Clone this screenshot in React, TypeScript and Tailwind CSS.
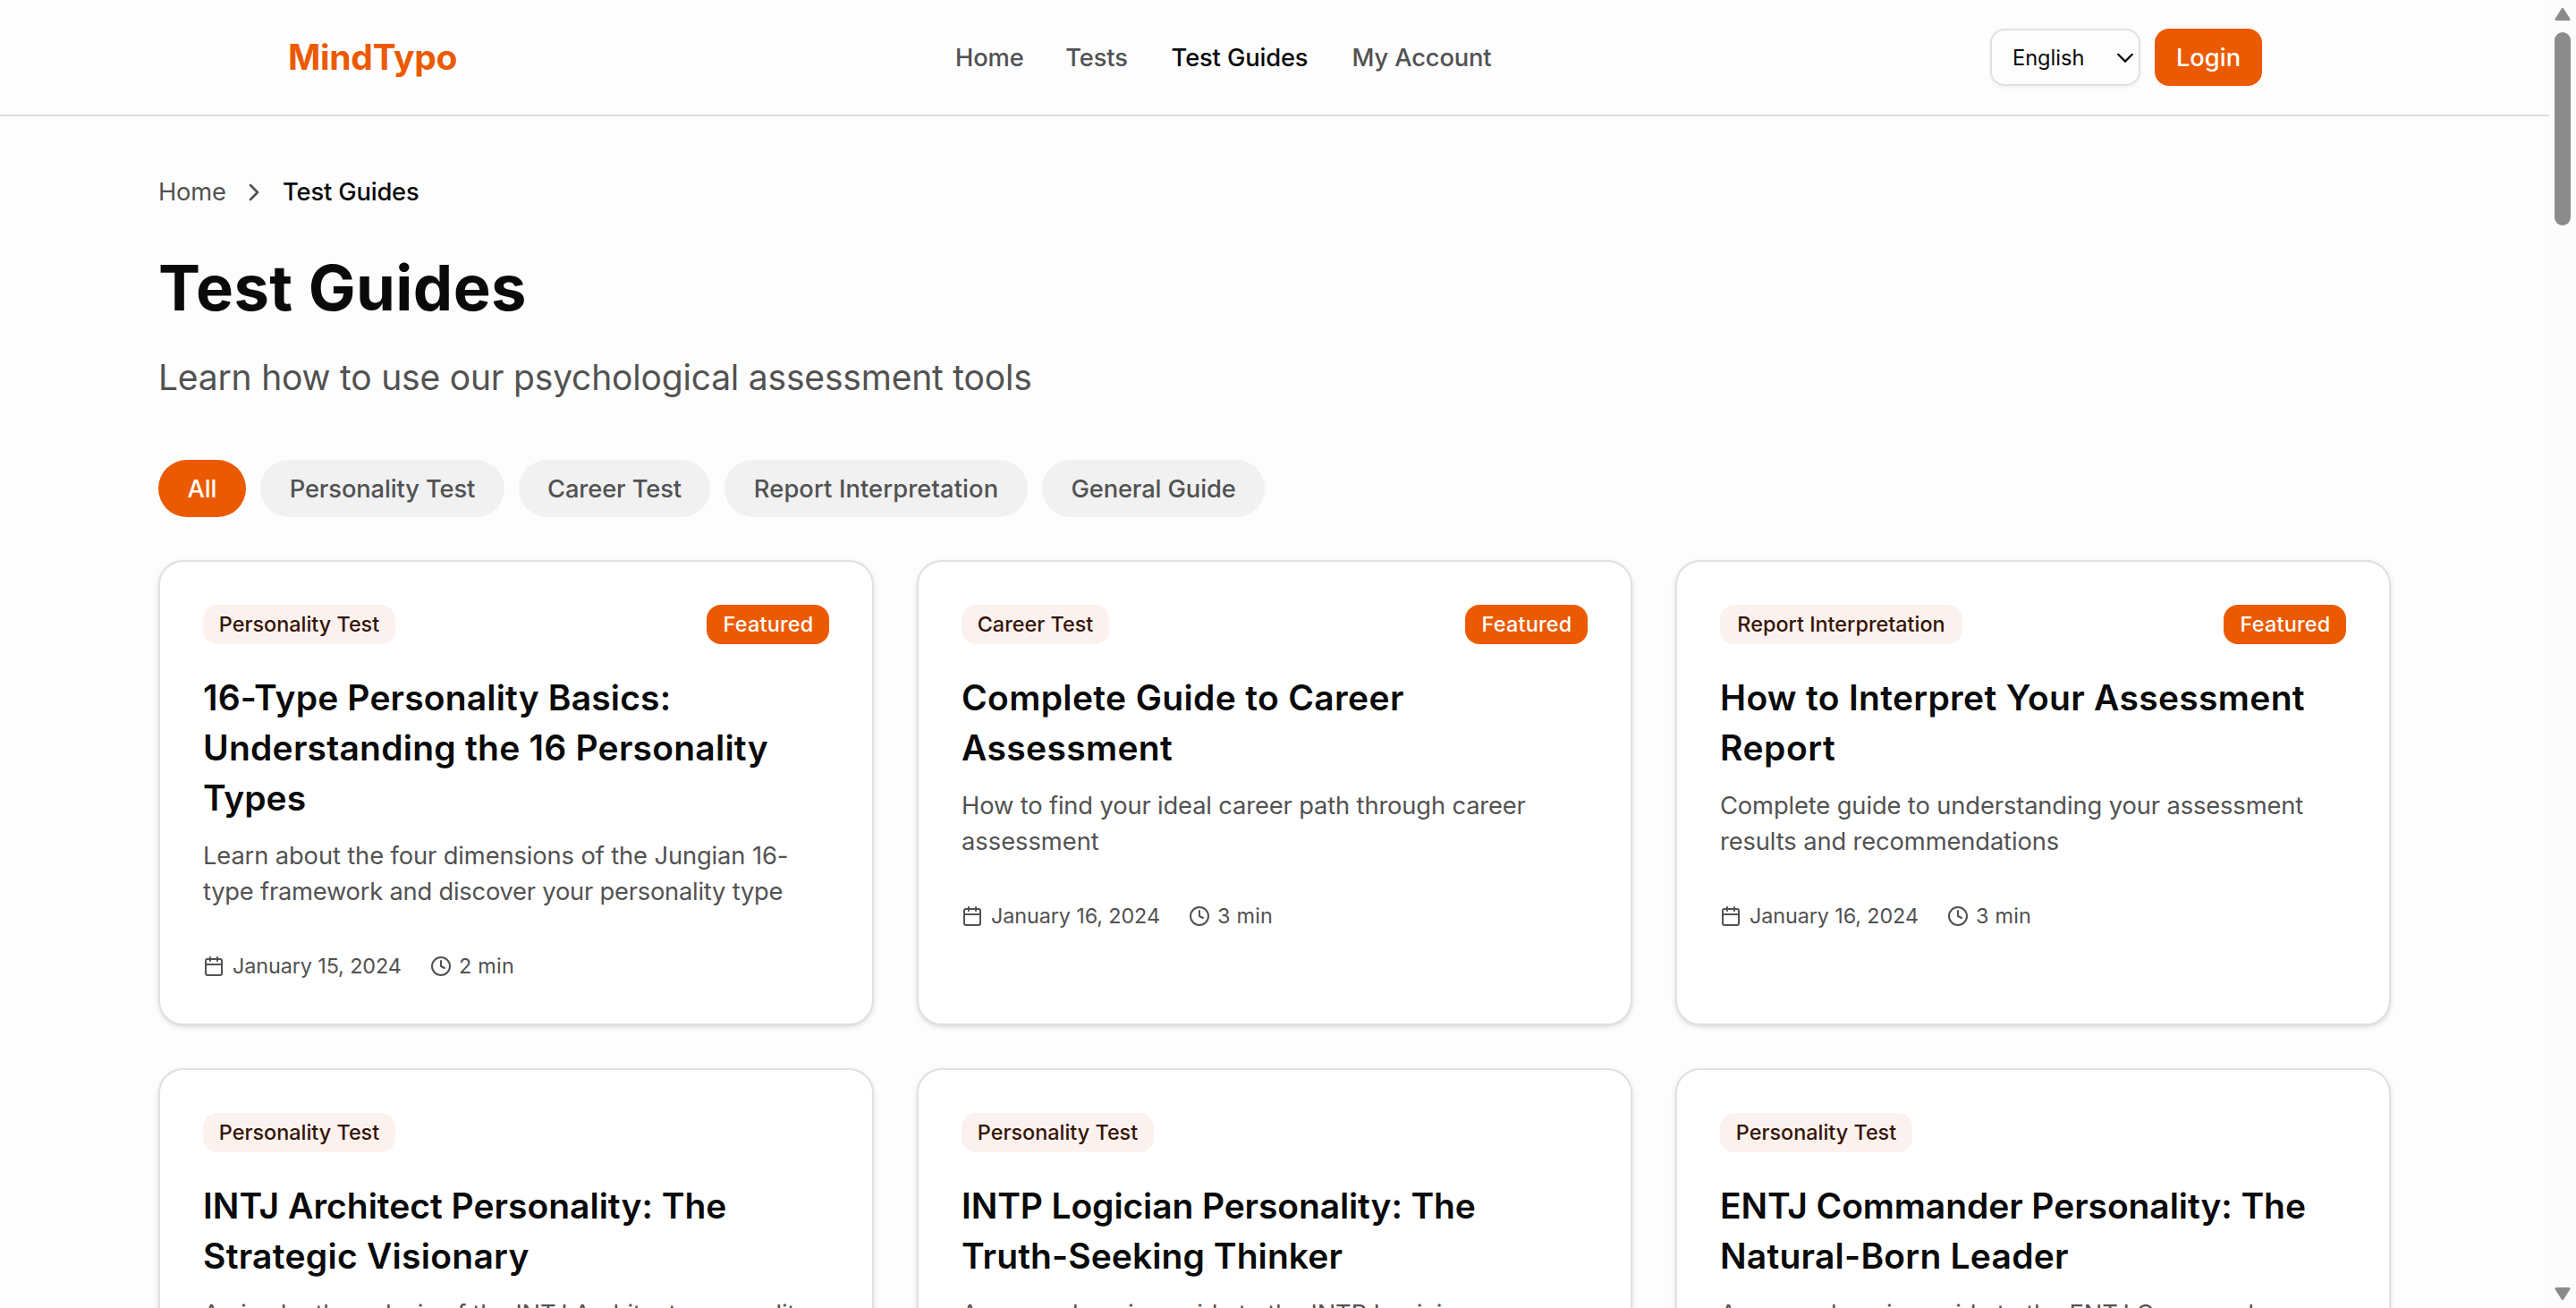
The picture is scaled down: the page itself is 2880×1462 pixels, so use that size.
import { Calendar, ChevronRight, Clock } from 'lucide-react';
import clsx from 'clsx';

type Line = { text: string; tracking?: string };

type Guide = {
    id: string;
    category: string;
    badgeWidth: string;
    title: Line[];
    description: Line[];
    date: string;
    minutes: number;
    featured?: boolean;
};

const NAV_ITEMS = [
    { label: 'Home', width: 'w-[75px]' },
    { label: 'Tests', width: 'w-[70px]' },
    { label: 'Test Guides', width: 'w-[154px]', active: true },
    { label: 'My Account', width: 'w-[157px]' },
];

const FILTERS = [
    { label: 'All', width: 'w-[98px]', active: true },
    { label: 'Personality Test', width: 'w-[273px]' },
    { label: 'Career Test', width: 'w-[214px]' },
    { label: 'Report Interpretation', width: 'w-[339px]', tracking: 'tracking-[0.004em]' },
    { label: 'General Guide', width: 'w-[249px]' },
];

const GUIDES: Guide[] = [
    {
        id: 'basics',
        category: 'Personality Test',
        badgeWidth: 'w-[215px]',
        title: [
            { text: '16-Type Personality Basics:', tracking: 'tracking-[0.004em]' },
            { text: 'Understanding the 16 Personality', tracking: 'tracking-[0.006em]' },
            { text: 'Types', tracking: 'tracking-[0em]' },
        ],
        description: [
            { text: 'Learn about the four dimensions of the Jungian 16-' },
            { text: 'type framework and discover your personality type', tracking: 'tracking-[-0.008em]' },
        ],
        date: 'January 15, 2024',
        minutes: 2,
        featured: true,
    },
    {
        id: 'career',
        category: 'Career Test',
        badgeWidth: 'w-[165px]',
        title: [
            { text: 'Complete Guide to Career', tracking: 'tracking-[0.009em]' },
            { text: 'Assessment', tracking: 'tracking-[0.009em]' },
        ],
        description: [
            { text: 'How to find your ideal career path through career', tracking: 'tracking-[-0.005em]' },
            { text: 'assessment', tracking: 'tracking-[0em]' },
        ],
        date: 'January 16, 2024',
        minutes: 3,
        featured: true,
    },
    {
        id: 'report',
        category: 'Report Interpretation',
        badgeWidth: 'w-[271px]',
        title: [
            { text: 'How to Interpret Your Assessment', tracking: 'tracking-[0.008em]' },
            { text: 'Report', tracking: 'tracking-[0.014em]' },
        ],
        description: [
            { text: 'Complete guide to understanding your assessment' },
            { text: 'results and recommendations' },
        ],
        date: 'January 16, 2024',
        minutes: 3,
        featured: true,
    },
    {
        id: 'intj',
        category: 'Personality Test',
        badgeWidth: 'w-[215px]',
        title: [
            { text: 'INTJ Architect Personality: The', tracking: 'tracking-[0em]' },
            { text: 'Strategic Visionary', tracking: 'tracking-[0.007em]' },
        ],
        description: [
            { text: 'An in-depth analysis of the INTJ Architect personality', tracking: 'tracking-[-0.007em]' },
            { text: 'type, strengths and career paths' },
        ],
        date: 'January 17, 2024',
        minutes: 5,
    },
    {
        id: 'intp',
        category: 'Personality Test',
        badgeWidth: 'w-[215px]',
        title: [
            { text: 'INTP Logician Personality: The', tracking: 'tracking-[-0.003em]' },
            { text: 'Truth-Seeking Thinker', tracking: 'tracking-[0.002em]' },
        ],
        description: [
            { text: 'A comprehensive guide to the INTP Logician' },
            { text: 'personality type' },
        ],
        date: 'January 17, 2024',
        minutes: 5,
    },
    {
        id: 'entj',
        category: 'Personality Test',
        badgeWidth: 'w-[215px]',
        title: [
            { text: 'ENTJ Commander Personality: The', tracking: 'tracking-[-0.002em]' },
            { text: 'Natural-Born Leader', tracking: 'tracking-[0.006em]' },
        ],
        description: [
            { text: 'A comprehensive guide to the ENTJ Commander' },
            { text: 'personality type' },
        ],
        date: 'January 17, 2024',
        minutes: 5,
    },
];

function Header() {
    return (
        <header className="h-[130px] shrink-0 border-b-2 border-[#e0e0e0]">
            <div className="mx-auto flex h-32 w-[2208px] items-center justify-between">
                <span className="w-[190px] whitespace-nowrap pl-px text-[39px] font-bold leading-[56px] tracking-[-0.007em] text-[#eb5a00]">
                    MindTypo
                </span>
                <nav className="flex items-center gap-12 pt-[2px] text-[27.3px] font-medium leading-10 tracking-[-0.005em]">
                    {NAV_ITEMS.map((item) => (
                        <a
                            key={item.label}
                            href="#"
                            className={clsx(
                                'whitespace-nowrap text-center',
                                item.width,
                                item.active ? 'text-[#0a0a0a]' : 'text-[#525252]',
                            )}
                        >
                            {item.label}
                        </a>
                    ))}
                </nav>
                <div className="flex items-center gap-4">
                    <button
                        type="button"
                        className="flex h-16 w-[168px] items-center justify-between rounded-[16px] border-2 border-[#e0e0e0] pl-[23px] pr-[6px] pt-px text-[23.6px] text-[#0a0a0a] shadow-[0_2px_4px_rgba(0,0,0,0.05)]"
                    >
                        English
                        <svg viewBox="0 0 18 12" className="h-3 w-[18px]" fill="none" stroke="currentColor" strokeWidth="2.2">
                            <path d="M1.2 1.8 L9 9.6 L16.8 1.8" strokeLinecap="round" />
                        </svg>
                    </button>
                    <button type="button" className="h-16 w-[120px] rounded-[16px] bg-[#eb5a00] pt-[2px] text-[27.3px] font-medium text-white">
                        Login
                    </button>
                </div>
            </div>
        </header>
    );
}

function GuideCard({ guide }: { guide: Guide }) {
    return (
        <article className="rounded-[28px] border-2 border-[#e0e0e0] bg-white p-12 shadow-[0_2px_6px_rgba(0,0,0,0.1),0_2px_4px_-2px_rgba(0,0,0,0.1)]">
            <div className="mb-8 flex items-center justify-between text-[23.4px] font-medium leading-[44px]">
                <span className={clsx('h-11 whitespace-nowrap rounded-[16px] bg-[#fbf2ef] text-center text-[#351406]', guide.badgeWidth)}>
                    {guide.category}
                </span>
                {guide.featured && (
                    <span className="h-11 w-[137px] rounded-[16px] bg-[#eb5a00] pl-px text-center tracking-[0.01em] text-white">Featured</span>
                )}
            </div>
            <h3 className="whitespace-nowrap text-[39px] font-semibold leading-[56px] text-[#0a0a0a]">
                {guide.title.map((line) => (
                    <span key={line.text} className={clsx('block', line.tracking)}>{line.text}</span>
                ))}
            </h3>
            <p className="mt-[17px] whitespace-nowrap text-[27.3px] leading-10 text-[#525252]">
                {guide.description.map((line) => (
                    <span key={line.text} className={clsx('block', line.tracking ?? 'tracking-[-0.004em]')}>{line.text}</span>
                ))}
            </p>
            <div className="mt-[47px] flex items-center gap-8 text-[23.4px] leading-8 text-[#525252]">
                <span className="flex items-center gap-2">
                    <Calendar className="h-6 w-6" />
                    <span className="w-[190px] whitespace-nowrap pl-px tracking-[-0.005em]">{guide.date}</span>
                </span>
                <span className="flex items-center gap-2">
                    <Clock className="h-6 w-6" />
                    <span className="tracking-[0.01em]">{guide.minutes} min</span>
                </span>
            </div>
        </article>
    );
}

function Scrollbar() {
    return (
        <aside className="flex h-full w-[30px] shrink-0 flex-col items-center bg-[#fcfcfc] pb-[9px] pt-[9px] text-[#8b8b8b]">
            <svg viewBox="0 0 18 14" className="h-[14px] w-[18px]" fill="currentColor" stroke="currentColor">
                <path d="M9 1.5 L16 12.5 H2 Z" strokeWidth="3" strokeLinejoin="round" />
            </svg>
            <div className="mt-[13px] h-[216px] w-[18px] rounded-full bg-[#8b8b8b]" />
            <svg viewBox="0 0 18 14" className="mt-auto h-[14px] w-[18px]" fill="currentColor" stroke="currentColor">
                <path d="M9 12.5 L2 1.5 H16 Z" strokeWidth="3" strokeLinejoin="round" />
            </svg>
        </aside>
    );
}

export default function App() {
    return (
        <div className="flex h-[1462px] w-[2880px] overflow-hidden bg-[#fdfdfd] font-['Inter',sans-serif]">
            <div className="flex h-full w-[2850px] flex-col overflow-hidden">
                <Header />
                <main className="mx-auto w-[2496px] pt-[65px]">
                    <div className="mb-[47px] flex items-center gap-4 text-[27.3px] leading-10 tracking-[-0.006em]">
                        <a href="#" className="w-[75px] text-[#525252]">Home</a>
                        <ChevronRight className="h-8 w-8 text-[#525252]" />
                        <span className="font-medium text-[#0a0a0a]">Test Guides</span>
                    </div>
                    <h1 className="mb-8 text-[70.5px] font-bold leading-[80px] tracking-[0.006em] text-[#0a0a0a]">Test Guides</h1>
                    <p className="mb-16 text-[39px] leading-[56px] tracking-[-0.005em] text-[#525252]">
                        Learn how to use our psychological assessment tools
                    </p>

                    <div className="mb-12 flex gap-4 text-[27.3px] font-medium">
                        {FILTERS.map((filter) => (
                            <button
                                key={filter.label}
                                type="button"
                                className={clsx(
                                    'h-16 whitespace-nowrap rounded-full pt-[2px]',
                                    filter.width,
                                    filter.tracking ?? 'tracking-[-0.004em]',
                                    filter.active ? 'bg-[#eb5a00] text-white' : 'bg-[#f1f1f1] text-[#525252]',
                                )}
                            >
                                {filter.label}
                            </button>
                        ))}
                    </div>

                    <div className="grid grid-cols-3 gap-12">
                        {GUIDES.map((guide) => (
                            <GuideCard key={guide.id} guide={guide} />
                        ))}
                    </div>
                </main>
            </div>
            <Scrollbar />
        </div>
    );
}
